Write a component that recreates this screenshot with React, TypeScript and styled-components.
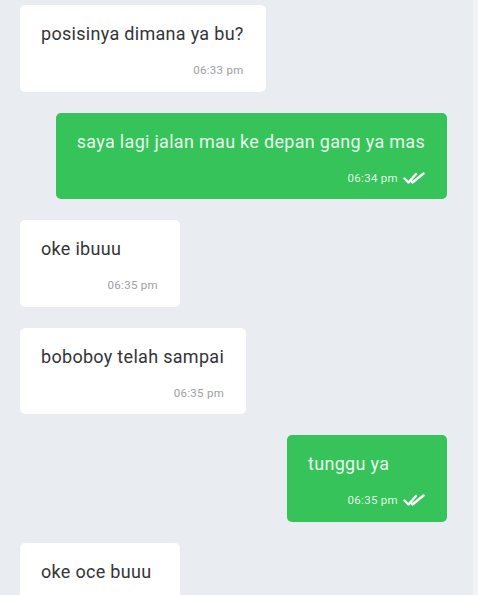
import React from "react";
import styled, { createGlobalStyle } from "styled-components";

const Global = createGlobalStyle`
  html, body { margin: 0; padding: 0; background: #e9ecf1; }
  body { font-family: Roboto, "Noto Sans", "Liberation Sans", sans-serif; }
`;

const Page = styled.div`
  display: flex;
  width: 478px;
  height: 595px;
  overflow: hidden;
  background: #e9ecf1;
`;

const ChatArea = styled.div`
  flex: 1;
  display: flex;
  flex-direction: column;
  gap: 21px;
  padding: 5px 26px 0 20px;
`;

const EdgeStrip = styled.div`
  width: 5px;
  background: #f1f3f6;
`;

const Row = styled.div<{ $out?: boolean }>`
  display: flex;
  justify-content: ${(p) => (p.$out ? "flex-end" : "flex-start")};
`;

const Bubble = styled.div<{ $out?: boolean }>`
  box-sizing: border-box;
  min-width: 160px;
  height: 86.6px;
  padding: 16px 22px 14px 21px;
  border-radius: 5px;
  background: ${(p) => (p.$out ? "#35c35a" : "#ffffff")};
  box-shadow: 0 0 1px rgba(0, 0, 0, 0.04);
  display: flex;
  flex-direction: column;
`;

const Text = styled.div<{ $out?: boolean }>`
  font-size: 18px;
  letter-spacing: 0.3px;
  line-height: 26px;
  color: ${(p) => (p.$out ? "#e8f8ec" : "#333437")};
  white-space: nowrap;
`;

const Meta = styled.div`
  margin-top: 16px;
  display: flex;
  justify-content: flex-end;
  align-items: center;
  gap: 5px;
  height: 14px;
`;

const Time = styled.span<{ $out?: boolean }>`
  font-size: 11.5px;
  letter-spacing: 0.3px;
  line-height: 14px;
  color: ${(p) => (p.$out ? "rgba(255,255,255,0.88)" : "#9c9ea2")};
`;

const Ticks = () => (
  <svg width="22" height="12" viewBox="0 0 22 12" fill="none">
    <path d="M1.5 6.5 L5.5 10.5 L13 2" stroke="#ffffff" strokeWidth="2.4" strokeLinecap="round" strokeLinejoin="round" />
    <path d="M8.5 9.5 L9.5 10.5 L20.5 1.5" stroke="#ffffff" strokeWidth="2.4" strokeLinecap="round" strokeLinejoin="round" />
  </svg>
);

type Msg = { text: string; time: string; out?: boolean };

const messages: Msg[] = [
  { text: "posisinya dimana ya bu?", time: "06:33 pm" },
  { text: "saya lagi jalan mau ke depan gang ya mas", time: "06:34 pm", out: true },
  { text: "oke ibuuu", time: "06:35 pm" },
  { text: "boboboy telah sampai", time: "06:35 pm" },
  { text: "tunggu ya", time: "06:35 pm", out: true },
  { text: "oke oce buuu", time: "06:36 pm" },
];

export default function App() {
  return (
    <>
      <Global />
      <Page>
        <ChatArea>
          {messages.map((m, i) => (
            <Row key={i} $out={m.out}>
              <Bubble $out={m.out}>
                <Text $out={m.out}>{m.text}</Text>
                <Meta>
                  <Time $out={m.out}>{m.time}</Time>
                  {m.out && <Ticks />}
                </Meta>
              </Bubble>
            </Row>
          ))}
        </ChatArea>
        <EdgeStrip />
      </Page>
    </>
  );
}
